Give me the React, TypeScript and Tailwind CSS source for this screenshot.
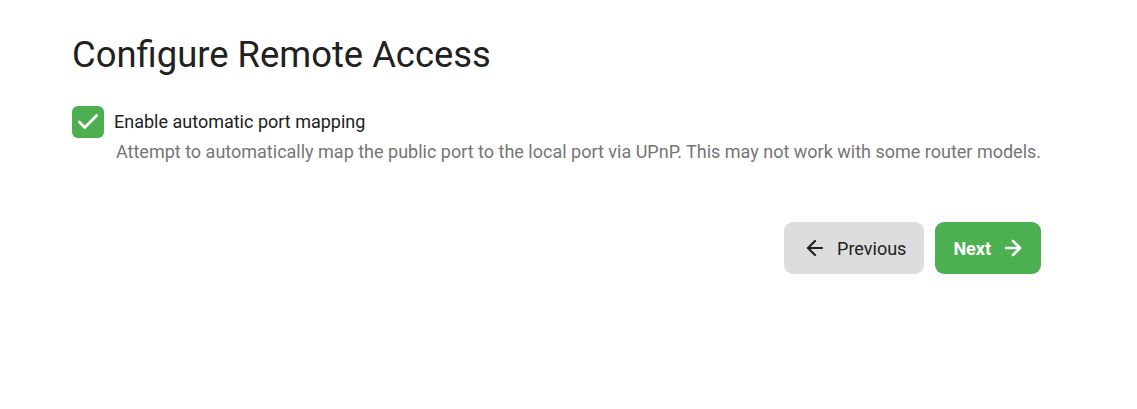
import React, { useState } from "react";
import { ArrowLeft, ArrowRight, Check } from "lucide-react";

export default function App() {
  const [enabled, setEnabled] = useState(true);

  return (
    <div className="min-h-screen bg-white font-['Roboto',sans-serif] text-[#212121]">
      <div className="inline-flex flex-col pl-[72px] pt-[33px]">
        <h1 className="text-[36.4px] font-normal leading-[44px]">Configure Remote Access</h1>

        <div className="mt-[29px] flex items-start gap-[10px]">
          <button
            type="button"
            onClick={() => setEnabled(!enabled)}
            className={`flex h-[32px] w-[32px] shrink-0 items-center justify-center rounded-[6px] ${
              enabled ? "bg-[#4caf50]" : "border-2 border-[#bdbdbd] bg-white"
            }`}
          >
            {enabled && <Check size={26} strokeWidth={2.6} color="white" />}
          </button>
          <div className="flex flex-col pt-[5px]">
            <span className="text-[18px] leading-[22px] text-[#212121]">Enable automatic port mapping</span>
            <span className="ml-[2px] mt-[8px] text-[18px] leading-[22px] text-[#757575]">
              Attempt to automatically map the public port to the local port via UPnP. This may not work with some router models.
            </span>
          </div>
        </div>

        <div className="mt-[59px] flex justify-end gap-[11px]">
          <button
            type="button"
            className="flex h-[52px] items-center gap-[10px] rounded-[9px] bg-[#dddddd] pl-[19px] pr-[18px] text-[18px] font-normal text-[#212121]"
          >
            <ArrowLeft size={24} strokeWidth={2.2} />
            Previous
          </button>
          <button
            type="button"
            className="flex h-[52px] items-center gap-[10px] rounded-[9px] bg-[#4caf50] pl-[18px] pr-[16px] text-[18px] font-bold text-white"
          >
            Next
            <ArrowRight size={24} strokeWidth={2.6} />
          </button>
        </div>
      </div>
    </div>
  );
}
